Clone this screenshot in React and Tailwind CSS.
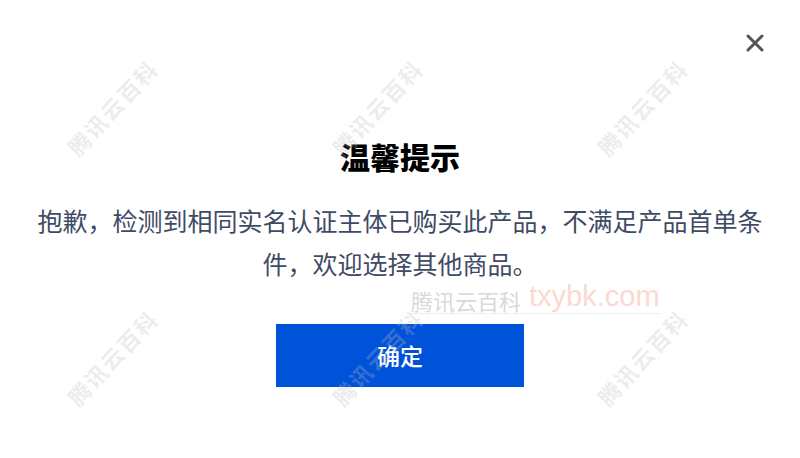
import React from 'react'

const MARKS = [
  { x: 112, y: 107 },
  { x: 377, y: 107 },
  { x: 642, y: 107 },
  { x: 112, y: 357 },
  { x: 377, y: 357 },
  { x: 642, y: 357 },
]

const FONT = { fontFamily: '"Noto Sans CJK SC", "Noto Sans", sans-serif' }

function Watermark({ x, y }) {
  return (
    <div
      className="absolute pointer-events-none select-none whitespace-nowrap text-[22px] font-bold tracking-[2px] text-[rgba(190,190,190,0.28)] leading-none"
      style={{ left: x, top: y, transform: 'translate(-50%, -50%) rotate(-47deg)' }}
    >
      腾讯云百科
    </div>
  )
}

export default function App() {
  return (
    <div className="relative w-[800px] h-[458px] bg-white overflow-hidden" style={FONT}>
      <div className="flex flex-col items-center pt-[134px]">
        <h2 className="text-[30px] font-black leading-[45px] text-black">温馨提示</h2>
        <p className="mt-[20px] w-[740px] text-center text-[25px] leading-[43px] text-[#3f4b65]">
          抱歉，检测到相同实名认证主体已购买此产品，不满足产品首单条件，欢迎选择其他商品。
        </p>
        <button className="mt-[39px] w-[248px] h-[63px] bg-[#0052d9] text-white text-[23px] font-medium flex items-center justify-center">
          确定
        </button>
      </div>

      {/* close */}
      <button className="absolute left-[745px] top-[33px] w-[20px] h-[20px] flex items-center justify-center">
        <svg width="18" height="18" viewBox="0 0 18 18" fill="none">
          <path d="M2 2L16 16M16 2L2 16" stroke="#555" strokeWidth="3" strokeLinecap="round" />
        </svg>
      </button>

      {/* site watermark */}
      <div className="absolute left-[411px] top-[282px] flex items-end border-b border-[#eeeeee] pb-[2px] leading-none pointer-events-none">
        <span className="text-[22px] text-[#d9d9d9]">腾讯云百科</span>
        <span className="ml-[8px] text-[29px] text-[#fbd9d0]" style={{ fontFamily: '"Liberation Sans", Arial, sans-serif' }}>txybk.com</span>
      </div>

      {MARKS.map((m, i) => <Watermark key={i} x={m.x} y={m.y} />)}
    </div>
  )
}
